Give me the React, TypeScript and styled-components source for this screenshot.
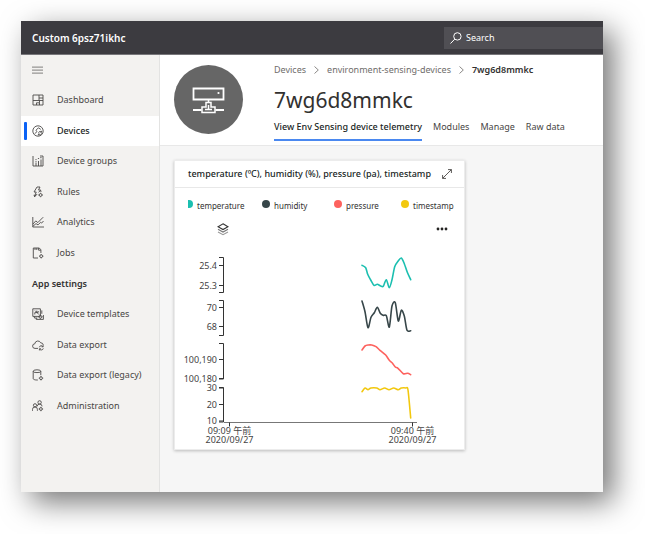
import React from "react";
import styled, { createGlobalStyle, css } from "styled-components";

const GlobalStyle = createGlobalStyle`
  *, *::before, *::after { box-sizing: border-box; }
  body {
    margin: 0;
    background: #fff;
    color: #323130;
    font-family: "Noto Sans", "Open Sans", "Noto Sans CJK JP", sans-serif;
    font-size: 9px;
    line-height: 12px;
  }
  button, input { font: inherit; color: inherit; }
  ul, ol { list-style: none; margin: 0; padding: 0; }
  h1, h2, h3 { margin: 0; }
`;

const Page = styled.div`
  display: flex;
  min-height: 100vh;
  padding: 21px 42px 42px 21px;
`;

const Window = styled.div`
  flex: 1;
  min-width: 0;
  display: flex;
  flex-direction: column;
  background: #f6f6f6;
  box-shadow: 10px 10px 28px rgba(0, 0, 0, 0.54);
`;

const TopBar = styled.header`
  display: flex;
  align-items: center;
  justify-content: space-between;
  height: 34px;
  padding-left: 11px;
  background: #3c3b40;
  border-bottom: 1px solid #77767a;
  color: #fff;
`;

const AppName = styled.span`
  font-size: 10px;
  font-weight: 600;
`;

const SearchBox = styled.label`
  display: flex;
  align-items: center;
  gap: 4px;
  width: 159px;
  height: 22px;
  padding-left: 6px;
  background: #504f54;
`;

const SearchInput = styled.input`
  flex: 1;
  min-width: 0;
  padding: 0;
  border: 0;
  outline: 0;
  background: transparent;
  &::placeholder { color: #fff; opacity: 1; }
`;

const Body = styled.div`
  flex: 1;
  display: flex;
  min-height: 0;
`;

const Sidebar = styled.nav`
  flex: none;
  width: 139px;
  background: #f3f2f0;
  border-right: 1px solid #e3e3e2;
`;

const IconButton = styled.button`
  display: grid;
  place-items: center;
  padding: 0;
  border: 0;
  background: none;
  cursor: pointer;
`;

const MenuButton = styled(IconButton)`
  height: 30px;
  padding-left: 11px;
`;

const NavList = styled.ul`
  display: grid;
  min-height: 336px;
`;

const NavHeading = styled.li`
  display: flex;
  align-items: center;
  padding-left: 11px;
  font-weight: 600;
`;

const NavItem = styled.li`
  display: grid;
`;

const NavLink = styled.a<{ $active?: boolean }>`
  position: relative;
  display: flex;
  align-items: center;
  gap: 13px;
  padding-left: 11px;
  color: #484644;
  text-decoration: none;
  ${(p) =>
    p.$active &&
    css`
      background: #fff;
      color: #201f1e;
      font-weight: 500;
      &::before {
        content: "";
        position: absolute;
        left: 3px;
        top: 6px;
        bottom: 6px;
        width: 3px;
        border-radius: 1px;
        background: #0b62f5;
      }
    `}
`;

const Main = styled.main`
  flex: 1;
  min-width: 0;
`;

const DeviceHeader = styled.section`
  display: flex;
  gap: 31px;
  padding: 0 14px;
  background: #fff;
  border-bottom: 1px solid #e8e8e8;
`;

const Avatar = styled.div`
  flex: none;
  display: grid;
  place-items: center;
  width: 69px;
  height: 69px;
  margin: 10px 0 11px;
  border-radius: 50%;
  background: #666;
`;

const DeviceInfo = styled.div`
  min-width: 0;
`;

const Crumbs = styled.ol`
  display: flex;
  align-items: center;
  gap: 8px;
  padding-top: 9px;
  white-space: nowrap;
`;

const Crumb = styled.li`
  display: flex;
  align-items: center;
  gap: 8px;
`;

const CrumbLink = styled.a<{ $current?: boolean }>`
  color: ${(p) => (p.$current ? "#323130" : "#6f6d6b")};
  font-weight: ${(p) => (p.$current ? 600 : 400)};
  text-decoration: none;
`;

const DeviceName = styled.h1`
  padding-top: 9px;
  font-size: 21px;
  line-height: 30px;
  font-weight: 400;
`;

const Tabs = styled.div`
  display: flex;
  gap: 11px;
  padding-top: 6px;
  white-space: nowrap;
`;

const Tab = styled.button<{ $active?: boolean }>`
  padding: 0 0 6px;
  border: 0;
  border-bottom: 2px solid ${(p) => (p.$active ? "#4a88f0" : "transparent")};
  background: none;
  color: ${(p) => (p.$active ? "#201f1e" : "#484644")};
  font-weight: ${(p) => (p.$active ? 500 : 400)};
  cursor: pointer;
`;

const Tile = styled.article`
  max-width: 291px;
  margin: 14px;
  background: #fff;
  border: 1px solid #ececec;
  box-shadow: 0 1px 3px rgba(0, 0, 0, 0.24);
`;

const TileHeader = styled.header`
  display: flex;
  align-items: center;
  justify-content: space-between;
  height: 27px;
  padding: 0 12px 0 13px;
  border-bottom: 1px solid #e8e8e8;
`;

const TileTitle = styled.h2`
  font-size: 9px;
  font-weight: 500;
  color: #201f1e;
  white-space: nowrap;
`;

const LegendClip = styled.div`
  margin: 9px 4px 0 13px;
  overflow: hidden;
`;

const Legend = styled.ul`
  display: grid;
  grid-template-columns: 77px 72px 67px auto;
  margin-left: -3px;
`;

const LegendItem = styled.li`
  display: flex;
  gap: 4px;
  padding-top: 3px;
  font-size: 8px;
  white-space: nowrap;
`;

const LegendDot = styled.span<{ $color: string }>`
  flex: none;
  width: 8px;
  height: 8px;
  background: ${(p) => p.$color};
  border-radius: 50%;
`;

const Tools = styled.div`
  display: flex;
  justify-content: space-between;
  align-items: center;
  height: 14px;
  margin: 10px 16px 11px 42px;
`;

const Chart = styled.svg`
  display: block;
  width: 100%;
  overflow: visible;
  text {
    font-family: "Noto Sans", "Noto Sans CJK JP", sans-serif;
    font-size: 9px;
    fill: #444;
  }
`;

type IconName =
  | "dashboard" | "devices" | "groups" | "rules" | "analytics" | "jobs"
  | "templates" | "export" | "legacy" | "admin";

const gear = (x: number, y: number) => (
  <>
    <circle cx={x} cy={y} r="1.4" />
    <path d={`M${x} ${y - 2.2}v.7M${x} ${y + 1.5}v.7M${x - 2.2} ${y}h.7M${x + 1.5} ${y}h.7`} />
  </>
);

const iconShapes: Record<IconName, React.ReactNode> = {
  dashboard: (
    <path d="M1 1h10v10H1zM7 1v5.500H1M7 4h4M7 6.500h4M4.500 8.800V11M4.500 8.800H7.500V6.500M7.500 8.800V11" />
  ),
  devices: (
    <>
      <circle cx="6" cy="6" r="5.2" />
      <path d="M2.6 8.8 5 6.6 4 5.200 6.4 2.800 8.800 4.400" />
      <path d="M6.600 7.800a1.600 1.600 0 0 1 2.800-.8M9.600 8.400a1.600 1.600 0 0 1-2.900.8M9.600 5.800v1.400H8.200M6.400 10.400V9h1.300" />
    </>
  ),
  groups: (
    <>
      <path d="M1 1v10h10V1M4 7.5V11M6.5 6v5M9 4.5V11M8 1h3" />
      <path d="M3.5 4.5h1M5.9 3.5h1.2M8.2 2.7h1.4M3.5 6.4h1" />
    </>
  ),
  rules: (
    <>
      <path d="M5 1h3L6.5 4h2.2L6.6 6.4M5 1 2 6h2.2L2.4 11 5.2 8M4 9.3H1.6" />
      {gear(8.6, 9)}
      <path d="M8.7 4.3 9 6" />
    </>
  ),
  analytics: (
    <path d="M.8 1v10H12M.8 8.2l3-3.3 2 1.7L11.2 1.2M.8 10.4 4 7.6l2 1.3 2.6-2.6 1 .8L11.5 5" />
  ),
  jobs: (
    <>
      <path d="M6 11H1.3V1h6l1.6 1.8V6M3 1v2M4.8 1v2M6.6 1v2.2h2.2" />
      {gear(9.2, 9.2)}
    </>
  ),
  templates: (
    <>
      <path d="M.8.8h7.6v7.6H.8zM2.8 6.5V4.6h2V2.6M3 2.6l4 4M6.2 3v1.4H4.6M9.8 2.4v3.4" />
      <path d="M2.4 8.4V10h3M4.2 10v1.4h7.2V7" />
      {gear(8.4, 8.8)}
    </>
  ),
  export: (
    <>
      <path d="M6 9.4H3a2.3 2.3 0 0 1-.2-4.6 3.1 3.1 0 0 1 5.9-1A2.6 2.6 0 0 1 11.3 6" />
      <path d="M7.3 8.3a2 2 0 0 1 3.6-.7M11.2 6.2v1.6H9.6M11.3 9.4a2 2 0 0 1-3.6.7M7.4 11.4V9.8H9" />
    </>
  ),
  legacy: (
    <>
      <ellipse cx="5" cy="2.2" rx="3.8" ry="1.4" />
      <path d="M1.2 2.2v7.4c0 .8 1.6 1.4 3.6 1.4h1M8.8 2.2v4" />
      {gear(9, 9.2)}
    </>
  ),
  admin: (
    <>
      <circle cx="7.6" cy="2.4" r="1.7" />
      <circle cx="3" cy="5.3" r="1.6" />
      <path d="M.5 10.8V9.4A2.4 2.4 0 0 1 3 7a2.4 2.4 0 0 1 2.4 2.4v1.4M5.2 6.4A2.4 2.4 0 0 1 7.6 4.1a2.4 2.4 0 0 1 2.5 2.2" />
      {gear(8.9, 9)}
    </>
  ),
};

const NavIcon = ({ name }: { name: IconName }) => (
  <svg width="12" height="12" viewBox="0 0 12 12" fill="none" stroke="#4c4a48" strokeWidth=".9" aria-hidden>
    {iconShapes[name]}
  </svg>
);

const mainNav: { icon: IconName; label: string; active?: boolean }[] = [
  { icon: "dashboard", label: "Dashboard" },
  { icon: "devices", label: "Devices", active: true },
  { icon: "groups", label: "Device groups" },
  { icon: "rules", label: "Rules" },
  { icon: "analytics", label: "Analytics" },
  { icon: "jobs", label: "Jobs" },
];

const settingsNav: { icon: IconName; label: string; active?: boolean }[] = [
  { icon: "templates", label: "Device templates" },
  { icon: "export", label: "Data export" },
  { icon: "legacy", label: "Data export (legacy)" },
  { icon: "admin", label: "Administration" },
];

const crumbs = ["Devices", "environment-sensing-devices", "7wg6d8mmkc"];
const tabs = ["View Env Sensing device telemetry", "Modules", "Manage", "Raw data"];

type Point = [number, number];

const series: { name: string; color: string; points: Point[] }[] = [
  {
    name: "temperature",
    color: "#1bbfb0",
    points: [[188, 18.3], [191.7, 20.7], [193.7, 27.3], [196.7, 33], [200, 38.3], [203.3, 37.3], [206.7, 39], [209.3, 39.3], [212.3, 32.7], [215.3, 40.7], [218, 32.7], [220.7, 19.7], [224, 14.3], [227.3, 11], [230.3, 16.7], [233.3, 25.3], [236.7, 32.7]],
  },
  {
    name: "humidity",
    color: "#374649",
    points: [[188, 54], [191, 64.7], [194, 80.7], [197, 70.3], [200.3, 65.7], [203.3, 60.3], [206.3, 66.3], [209, 68.3], [212.3, 68.7], [215.3, 80], [218, 59], [221.3, 55.7], [224.3, 74], [227.3, 63.3], [230.3, 69], [233, 83.3], [236.7, 83.7]],
  },
  {
    name: "pressure",
    color: "#fd625e",
    points: [[188, 103], [191, 99], [194.3, 98], [197.7, 98], [202, 99.7], [206, 103.3], [211.7, 108], [215.3, 113.3], [218.3, 116], [221.3, 120], [224, 121.3], [229.3, 126.7], [233.7, 126.3], [236.7, 127.7]],
  },
  {
    name: "timestamp",
    color: "#f2c80f",
    points: [[188, 144.7], [191, 141], [194, 142.7], [197, 141], [202.7, 141], [206, 142.7], [210.7, 141], [215, 142.7], [219.7, 141], [224.3, 142.7], [227.3, 141], [232, 141], [234, 143], [236.7, 171]],
  },
];

const axes: { from: number; to: number; ticks: [number, string][] }[] = [
  { from: 10.5, to: 45.5, ticks: [[18.5, "25.4"], [38.5, "25.3"]] },
  { from: 53.5, to: 88.5, ticks: [[60.5, "70"], [79.5, "68"]] },
  { from: 96.5, to: 132, ticks: [[112.5, "100,190"], [131.5, "100,180"]] },
  { from: 140.5, to: 175, ticks: [[141, "30"], [157.5, "20"], [174, "10"]] },
];

const timeTicks: [number, string, string][] = [
  [55.5, "09:09 午前", "2020/09/27"],
  [238.5, "09:40 午前", "2020/09/27"],
];

/* Cubic segments whose tangents follow the neighbouring samples. */
function smoothPath(points: Point[]): string {
  let d = `M${points[0][0]} ${points[0][1]}`;
  for (let i = 0; i < points.length - 1; i++) {
    const before = points[i - 1] ?? points[i];
    const start = points[i];
    const end = points[i + 1];
    const after = points[i + 2] ?? end;
    const c1 = [start[0] + (end[0] - before[0]) / 7, start[1] + (end[1] - before[1]) / 7];
    const c2 = [end[0] - (after[0] - start[0]) / 7, end[1] - (after[1] - start[1]) / 7];
    d += `C${c1[0]} ${c1[1]} ${c2[0]} ${c2[1]} ${end[0]} ${end[1]}`;
  }
  return d;
}

const TelemetryChart = () => (
  <Chart viewBox="0 0 289 202" role="img" aria-label="Device telemetry over time">
    <g fill="none" stroke="#333" strokeWidth="1">
      {axes.map((axis) => (
        <g key={axis.from}>
          <path d={`M44 ${axis.from}h4.5V${axis.to}h-4.5`} />
          {axis.ticks.map(([y]) => <path key={y} d={`M44 ${y}h4.5`} />)}
        </g>
      ))}
      <path d="M49 175.5H242" stroke="#777" />
      {timeTicks.map(([x]) => <path key={x} d={`M${x - 1} 175.5v4`} />)}
    </g>
    {axes.map((axis) =>
      axis.ticks.map(([y, label]) => (
        <text key={label} x="42" y={y + 3} textAnchor="end">{label}</text>
      ))
    )}
    {timeTicks.map(([x, time, date]) => (
      <g key={x} textAnchor="middle">
        <text x={x - 1} y="187">{time}</text>
        <text x={x - 1} y="196">{date}</text>
      </g>
    ))}
    <g fill="none" strokeWidth="1.6" strokeLinecap="round" strokeLinejoin="round" transform="translate(-1 0)">
      {series.map((s) => <path key={s.name} d={smoothPath(s.points)} stroke={s.color} />)}
    </g>
  </Chart>
);

const NavEntry = ({ icon, label, active }: { icon: IconName; label: string; active?: boolean }) => (
  <NavItem>
    <NavLink href="#" $active={active} aria-current={active ? "page" : undefined}>
      <NavIcon name={icon} />
      {label}
    </NavLink>
  </NavItem>
);

const App = () => (
  <>
    <GlobalStyle />
    <Page>
      <Window>
        <TopBar>
          <AppName>Custom 6psz71ikhc</AppName>
          <SearchBox>
            <svg width="12" height="12" viewBox="0 0 12 12" fill="none" stroke="#fff" strokeWidth="1" aria-hidden>
              <circle cx="7.4" cy="4.4" r="3.7" />
              <path d="M4.8 7.1.5 11.5" />
            </svg>
            <SearchInput type="search" placeholder="Search" aria-label="Search" />
          </SearchBox>
        </TopBar>
        <Body>
          <Sidebar aria-label="Main">
            <MenuButton aria-label="Toggle menu">
              <svg width="11" height="8" viewBox="0 0 11 8" stroke="#979593" strokeWidth="1.3" aria-hidden>
                <path d="M0 1.2h11M0 4.2h11M0 7.2h11" />
              </svg>
            </MenuButton>
            <NavList>
              {mainNav.map((item) => <NavEntry key={item.label} {...item} />)}
              <NavHeading>App settings</NavHeading>
              {settingsNav.map((item) => <NavEntry key={item.label} {...item} />)}
            </NavList>
          </Sidebar>
          <Main>
            <DeviceHeader>
              <Avatar>
                <svg width="33" height="28" viewBox="0 0 33 28" fill="none" stroke="#fff" strokeWidth="1.8" aria-hidden>
                  <path d="M1.500 2.500h30v11h-30zM1 24h8.500M23.500 24H32" />
                  <path d="M16.500 13.500V16M14 16.500h5v4.500h4v5.500H10V21h4zM16.500 19v4.500M13 23.500h7" strokeWidth="1.500" />
                  <circle cx="26.500" cy="7" r="1.100" fill="#fff" stroke="none" />
                </svg>
              </Avatar>
              <DeviceInfo>
                <Crumbs aria-label="Breadcrumb">
                  {crumbs.map((label, i) => (
                    <Crumb key={label}>
                      {i > 0 && (
                        <svg width="5" height="8" viewBox="0 0 5 8" fill="none" stroke="#8a8886" aria-hidden>
                          <path d="M.5.500 4.300 4 .5 7.500" />
                        </svg>
                      )}
                      <CrumbLink href="#" $current={i === crumbs.length - 1}>{label}</CrumbLink>
                    </Crumb>
                  ))}
                </Crumbs>
                <DeviceName>7wg6d8mmkc</DeviceName>
                <Tabs role="tablist">
                  {tabs.map((label, i) => (
                    <Tab key={label} role="tab" aria-selected={i === 0} $active={i === 0}>{label}</Tab>
                  ))}
                </Tabs>
              </DeviceInfo>
            </DeviceHeader>
            <Tile>
              <TileHeader>
                <TileTitle>temperature (ºC), humidity (%), pressure (pa), timestamp</TileTitle>
                <IconButton aria-label="Expand">
                  <svg width="10" height="10" viewBox="0 0 10 10" fill="none" stroke="#484644" strokeWidth=".9" aria-hidden>
                    <path d="M.6 9.400 9.400.6M6 .6h3.400V4M.6 6v3.400H4" />
                  </svg>
                </IconButton>
              </TileHeader>
              <LegendClip>
                <Legend>
                  {series.map((s) => (
                    <LegendItem key={s.name}>
                      <LegendDot $color={s.color} />
                      {s.name}
                    </LegendItem>
                  ))}
                </Legend>
              </LegendClip>
              <Tools>
                <IconButton aria-label="Stack series">
                  <svg width="12" height="13" viewBox="0 0 12 13" fill="none" strokeWidth="1.100" aria-hidden>
                    <path d="M6 .8 11 3.700 6 6.600 1 3.700z" stroke="#333" />
                    <path d="M1 6.200 6 9l5-2.800" stroke="#777" />
                    <path d="M1 8.900l5 2.800 5-2.800" stroke="#999" />
                  </svg>
                </IconButton>
                <IconButton aria-label="More options">
                  <svg width="12" height="4" viewBox="0 0 12 4" fill="#252423" aria-hidden>
                    <circle cx="2" cy="2" r="1.400" />
                    <circle cx="6" cy="2" r="1.400" />
                    <circle cx="10" cy="2" r="1.400" />
                  </svg>
                </IconButton>
              </Tools>
              <TelemetryChart />
            </Tile>
          </Main>
        </Body>
      </Window>
    </Page>
  </>
);

export default App;
